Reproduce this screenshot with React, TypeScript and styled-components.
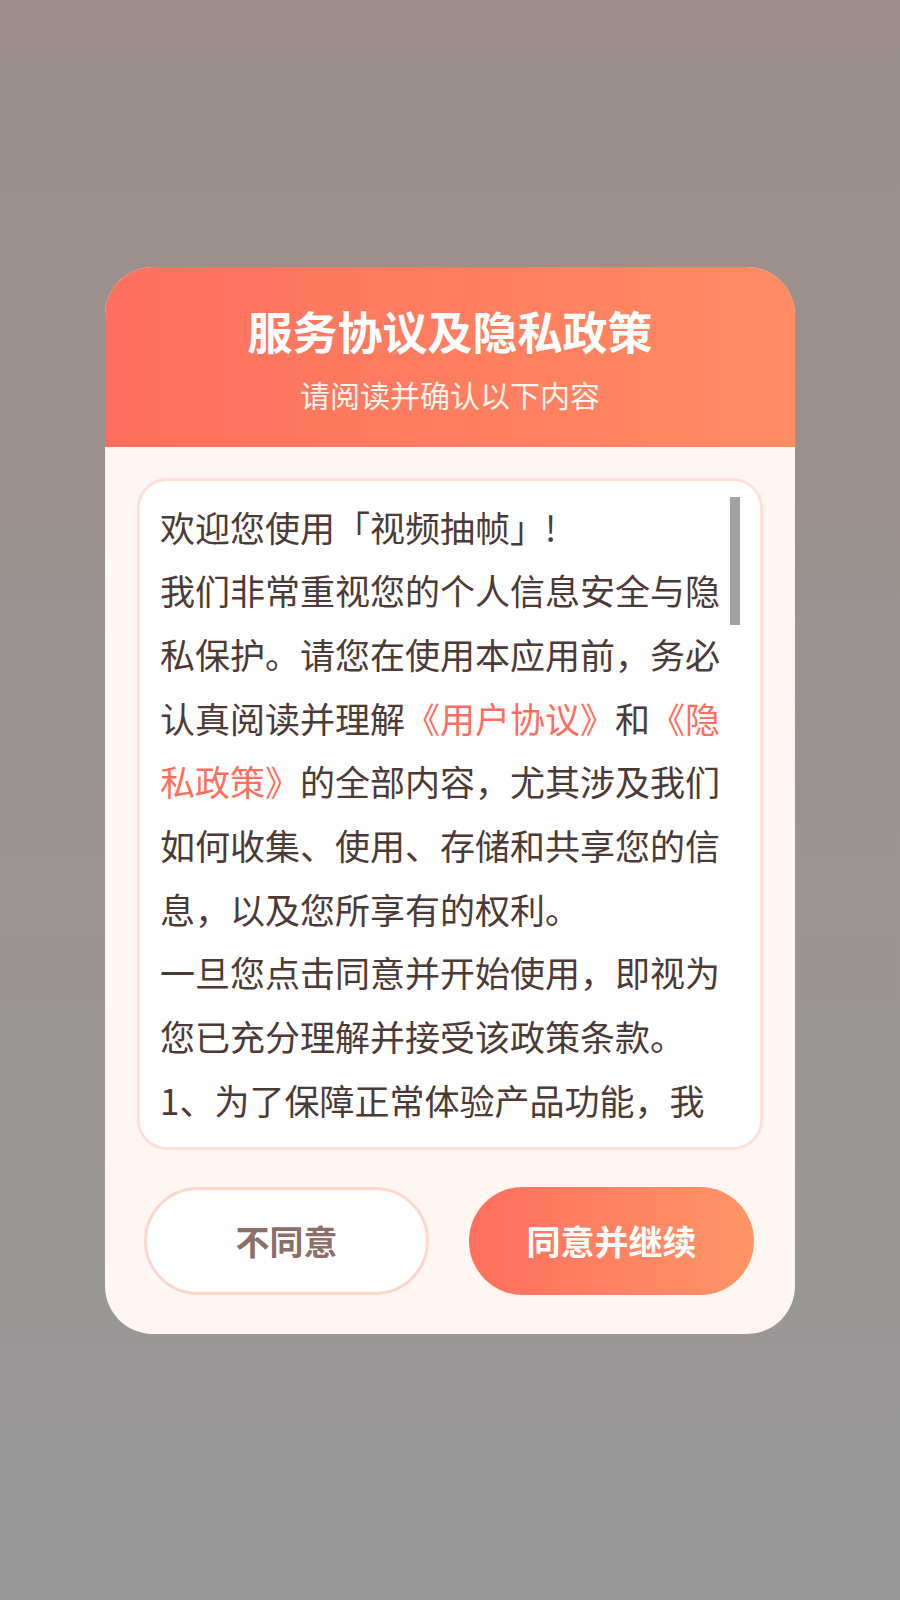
import styled, { createGlobalStyle } from 'styled-components'

const GlobalStyle = createGlobalStyle`
  html, body {
    margin: 0;
    padding: 0;
  }
  body {
    font-family: "Noto Sans CJK SC", "Noto Sans", sans-serif;
  }
`

const Page = styled.div`
  min-height: 100vh;
  display: flex;
  align-items: center;
  justify-content: center;
  background: linear-gradient(to bottom, #9b8e8a, #999999);
`

const Card = styled.div`
  width: 690px;
  border-radius: 48px;
  overflow: hidden;
  background: #fff6f3;
  display: flex;
  flex-direction: column;
`

const Header = styled.div`
  height: 180px;
  box-sizing: border-box;
  padding-top: 35px;
  background: linear-gradient(to right, #ff6f5f, #ff8c62);
  display: flex;
  flex-direction: column;
  align-items: center;
  color: #fff;
`

const Title = styled.div`
  font-size: 45px;
  font-weight: 700;
  line-height: 58px;
`

const SubTitle = styled.div`
  margin-top: 13px;
  font-size: 30px;
  line-height: 42px;
  color: #fff3ea;
`

const Body = styled.div`
  padding: 31px 32px 39px;
  display: flex;
  flex-direction: column;
`

const TextBox = styled.div`
  position: relative;
  height: 672px;
  box-sizing: border-box;
  padding: 14px 37px 0 20px;
  border: 3px solid #ffe0d8;
  border-radius: 30px;
  background: #fff;
  overflow: hidden;
`

const ScrollThumb = styled.div`
  position: absolute;
  top: 16px;
  right: 20px;
  width: 10px;
  height: 128px;
  background: #a1a0a5;
`

const Para = styled.p`
  margin: 0;
  font-size: 35px;
  line-height: 63.7px;
  color: #4b3a35;
`

const Link = styled.span`
  color: #ff6e5e;
`

const Actions = styled.div`
  margin-top: 37px;
  padding: 0 9px 0 7px;
  display: flex;
  gap: 40px;
`

const Button = styled.button<{ $primary?: boolean }>`
  flex: 1 1 0;
  min-width: 0;
  height: 108px;
  box-sizing: border-box;
  border-radius: 54px;
  font-family: inherit;
  font-size: 34px;
  font-weight: 700;
  cursor: pointer;
  border: 3px solid ${(p) => (p.$primary ? 'transparent' : '#ffd6cc')};
  background: ${(p) =>
    p.$primary ? 'linear-gradient(to right, #ff6f5f, #ff9566) border-box' : '#fff'};
  color: ${(p) => (p.$primary ? '#fff' : '#8b6f68')};
`

export default function App() {
  return (
    <>
      <GlobalStyle />
      <Page>
        <Card>
          <Header>
            <Title>服务协议及隐私政策</Title>
            <SubTitle>请阅读并确认以下内容</SubTitle>
          </Header>
          <Body>
            <TextBox>
              <Para>欢迎您使用「视频抽帧」!</Para>
              <Para>
                我们非常重视您的个人信息安全与隐私保护。请您在使用本应用前，务必认真阅读并理解
                <Link>《用户协议》</Link>和<Link>《隐私政策》</Link>
                的全部内容，尤其涉及我们如何收集、使用、存储和共享您的信息，以及您所享有的权利。
              </Para>
              <Para>一旦您点击同意并开始使用，即视为您已充分理解并接受该政策条款。</Para>
              <Para>1、为了保障正常体验产品功能，我们会在您使用过程中申请必要的设备权限。</Para>
              <Para>2、未经您的同意，我们不会向第三方共享或提供您的个人信息。</Para>
              <ScrollThumb />
            </TextBox>
            <Actions>
              <Button>不同意</Button>
              <Button $primary>同意并继续</Button>
            </Actions>
          </Body>
        </Card>
      </Page>
    </>
  )
}
